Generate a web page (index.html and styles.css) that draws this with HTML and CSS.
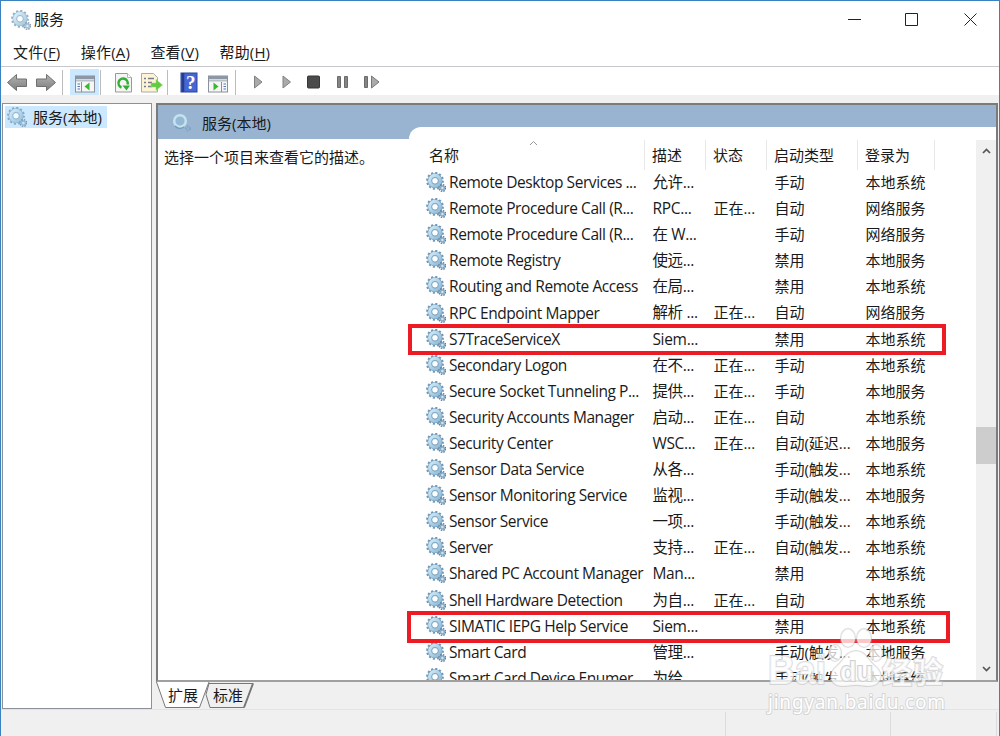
FILE: index.html
```html
<!DOCTYPE html>
<html lang="zh-CN">
  <head>
    <meta charset="UTF-8" />
    <meta name="viewport" content="width=device-width, initial-scale=1.0" />
    <title>服务</title>
    <link rel="stylesheet" href="styles.css">
  </head>

  <body>
    <svg class="defs">
      <linearGradient id="gear-fill" x1="0" y1="0" x2="1" y2="1">
        <stop offset="0" stop-color="#cfe8f5" />
        <stop offset="1" stop-color="#8fb9d6" />
      </linearGradient>
      <linearGradient id="grey-fill" x1="0" y1="0" x2="0" y2="1">
        <stop offset="0" stop-color="#b5b5b5" />
        <stop offset="1" stop-color="#7c7c7c" />
      </linearGradient>
      <symbol id="gear" viewBox="0 0 20 20">
        <circle cx="9" cy="8.8" r="7.9" fill="none" stroke="#7197b5" stroke-width="2" stroke-dasharray="2.1 2.03" />
        <circle cx="9" cy="8.8" r="5.3" fill="none" stroke="#6c9dbe" stroke-width="4.4" />
        <circle cx="9" cy="8.8" r="5.2" fill="none" stroke="url(#gear-fill)" stroke-width="3.5" />
        <circle cx="9" cy="8.8" r="3.3" fill="#fbfdff" stroke="#6f9dbd" stroke-width=".9" />
        <circle cx="16.4" cy="16" r="3.3" fill="none" stroke="#587d9c" stroke-width="1.5" stroke-dasharray="1.5 1.1" />
        <circle cx="16.4" cy="16" r="2" fill="#d4e5f0" stroke="#86a9c4" stroke-width="1.5" />
      </symbol>
    </svg>

    <div class="window">
      <div class="title-bar">
        <svg class="gear pale"><use href="#gear" /></svg>
        <span class="title">服务</span>
        <svg class="controls" width="130" height="16" viewBox="0 0 130 16">
          <path d="M0 7.5h13M57.5 1.5h12v12h-12zM116.500 1.500l12 12M128.500 1.500l-12 12" fill="none" stroke="#222" />
        </svg>
      </div>

      <div class="menu-bar">
        <span>文件(<u>F</u>)</span>
        <span>操作(<u>A</u>)</span>
        <span>查看(<u>V</u>)</span>
        <span>帮助(<u>H</u>)</span>
      </div>

      <div class="toolbar">
        <svg width="400" height="28" viewBox="0 -1 400 28">
          <path d="M6.500 14.500l9-8v4.500h10v7.500h-10v4z" fill="url(#grey-fill)" stroke="#707070" />
          <path d="M54.500 14.500l-9-8v4.500h-10v7.500h10v4z" fill="url(#grey-fill)" stroke="#707070" />
          <path d="M61.500 2v25M99.500 2v25M166.500 2v25M234.500 2v25" stroke="#bcbcbc" />
          <rect x="69" y="1" width="29" height="26" fill="#cce8ff" />
          <!-- console tree -->
          <rect x="74.500" y="8" width="19" height="16" fill="#f6f6f6" stroke="#8a919b" />
          <path d="M75 8h18v3h-18z" fill="#8d98a6" />
          <path d="M75 12.500h18" stroke="#b7bfc9" stroke-width="2" />
          <path d="M80.500 14v10" stroke="#8a919b" />
          <path d="M76.500 16h2.500M76.500 18.500h2.500M76.500 21h2.500" stroke="#4d7dbd" />
          <path d="M88.500 14.500v8l-5-4z" fill="#3ab82e" />
          <!-- refresh -->
          <path d="M114.500 5.500h12l4 4v14.500h-16z" fill="#f5f5f5" stroke="#999" />
          <path d="M126.500 5.500v4h4" fill="#fff" stroke="#b5b5b5" />
          <path d="M120.500 19.500a4.600 4.600 0 1 1 6-3" fill="none" stroke="#36ad35" stroke-width="2.500" />
          <path d="M121.500 17.500h7.500l-3.500 5z" fill="#36ad35" />
          <!-- export -->
          <path d="M140.500 5.500h12l4 4v14.500h-16z" fill="#fdf4d5" stroke="#aaa" />
          <path d="M143 10.500h2M143 14.500h2M143 18.500h2M147 10.500h6M147 14.500h4M147 18.500h4" stroke="#777b8d" stroke-width="1.500" />
          <path d="M150 15h5v-3.500l6.500 5.500-6.500 5.500v-3.500h-5z" fill="#62cd3c" stroke="#9ad785" stroke-width=".5" />
          <!-- help -->
          <rect x="180" y="5" width="16" height="19" fill="#4567d3" stroke="#29449e" />
          <path d="M182 5v19" stroke="#263c91" stroke-width="2.500" />
          <text x="185" y="21" class="help-mark">?</text>
          <!-- action pane -->
          <rect x="207.500" y="8" width="19" height="16" fill="#f6f6f6" stroke="#8a919b" />
          <path d="M208 8h18v3h-18z" fill="#8d98a6" />
          <path d="M208 12.500h18" stroke="#b7bfc9" stroke-width="2" />
          <path d="M220.500 14v10" stroke="#8a919b" />
          <path d="M222.500 16h2.500M222.500 18.500h2.500M222.500 21h2.500" stroke="#4d7dbd" />
          <path d="M212.500 14.500v8l5-4z" fill="#3ab82e" />
          <!-- start, resume, stop, pause, restart -->
          <path d="M253.500 8v12l7.500-6zM282 8v12l7.500-6z" fill="#aaa" stroke="#808080" />
          <rect x="306.500" y="8" width="12" height="12" rx="1" fill="#4b4b4b" stroke="#373737" />
          <path d="M336.500 8.500h3v11h-3zM343.500 8.500h3v11h-3zM363.500 8.500h3v11h-3z" fill="#858585" stroke="#6b6b6b" />
          <path d="M370.500 8v12l7.500-6z" fill="#aaa" stroke="#777" />
        </svg>
      </div>

      <div class="main">
        <div class="tree">
          <div class="tree-item">
            <svg class="gear pale"><use href="#gear" /></svg>
            <span>服务(本地)</span>
          </div>
        </div>

        <div class="right">
          <div class="pane">
            <div class="band">
              <svg width="20" height="20" viewBox="0 0 20 20">
                <circle cx="8" cy="8" r="5.800" fill="#94b9d2" stroke="#c4e2ef" stroke-width="2.500" />
                <path d="M3 13a7 7 0 0 0 9 1" fill="none" stroke="#7399b9" stroke-width="1.500" />
                <circle cx="16" cy="15.500" r="2" fill="none" stroke="#7ea5c4" stroke-width="2" stroke-dasharray="1.500 1" />
              </svg>
              <span>服务(本地)</span>
            </div>
            <div class="pane-body">
              <div class="description">选择一个项目来查看它的描述。</div>
              <div class="list">
                <div class="row head">
                  <span>名称</span><span>描述</span><span>状态</span><span>启动类型</span><span>登录为</span>
                  <svg class="sort" width="9" height="6" viewBox="0 0 9 6"><path d="M1 5l3.500-3.500 3.500 3.500" fill="none" stroke="#999" /></svg>
                </div>
                <div class="rows">
                  <div class="row"><span><svg class="gear"><use href="#gear" /></svg>Remote Desktop Services ...</span><span>允许...</span><span></span><span>手动</span><span>本地系统</span></div>
                  <div class="row"><span><svg class="gear"><use href="#gear" /></svg>Remote Procedure Call (R...</span><span>RPC...</span><span>正在...</span><span>自动</span><span>网络服务</span></div>
                  <div class="row"><span><svg class="gear"><use href="#gear" /></svg>Remote Procedure Call (R...</span><span>在 W...</span><span></span><span>手动</span><span>网络服务</span></div>
                  <div class="row"><span><svg class="gear"><use href="#gear" /></svg>Remote Registry</span><span>使远...</span><span></span><span>禁用</span><span>本地服务</span></div>
                  <div class="row"><span><svg class="gear"><use href="#gear" /></svg>Routing and Remote Access</span><span>在局...</span><span></span><span>禁用</span><span>本地系统</span></div>
                  <div class="row"><span><svg class="gear"><use href="#gear" /></svg>RPC Endpoint Mapper</span><span>解析 ...</span><span>正在...</span><span>自动</span><span>网络服务</span></div>
                  <div class="row"><span><svg class="gear"><use href="#gear" /></svg>S7TraceServiceX</span><span>Siem...</span><span></span><span>禁用</span><span>本地系统</span></div>
                  <div class="row"><span><svg class="gear"><use href="#gear" /></svg>Secondary Logon</span><span>在不...</span><span>正在...</span><span>手动</span><span>本地系统</span></div>
                  <div class="row"><span><svg class="gear"><use href="#gear" /></svg>Secure Socket Tunneling P...</span><span>提供...</span><span>正在...</span><span>手动</span><span>本地服务</span></div>
                  <div class="row"><span><svg class="gear"><use href="#gear" /></svg>Security Accounts Manager</span><span>启动...</span><span>正在...</span><span>自动</span><span>本地系统</span></div>
                  <div class="row"><span><svg class="gear"><use href="#gear" /></svg>Security Center</span><span>WSC...</span><span>正在...</span><span>自动(延迟...</span><span>本地服务</span></div>
                  <div class="row"><span><svg class="gear"><use href="#gear" /></svg>Sensor Data Service</span><span>从各...</span><span></span><span>手动(触发...</span><span>本地系统</span></div>
                  <div class="row"><span><svg class="gear"><use href="#gear" /></svg>Sensor Monitoring Service</span><span>监视...</span><span></span><span>手动(触发...</span><span>本地服务</span></div>
                  <div class="row"><span><svg class="gear"><use href="#gear" /></svg>Sensor Service</span><span>一项...</span><span></span><span>手动(触发...</span><span>本地系统</span></div>
                  <div class="row"><span><svg class="gear"><use href="#gear" /></svg>Server</span><span>支持...</span><span>正在...</span><span>自动(触发...</span><span>本地系统</span></div>
                  <div class="row"><span><svg class="gear"><use href="#gear" /></svg>Shared PC Account Manager</span><span>Man...</span><span></span><span>禁用</span><span>本地系统</span></div>
                  <div class="row"><span><svg class="gear"><use href="#gear" /></svg>Shell Hardware Detection</span><span>为自...</span><span>正在...</span><span>自动</span><span>本地系统</span></div>
                  <div class="row"><span><svg class="gear"><use href="#gear" /></svg>SIMATIC IEPG Help Service</span><span>Siem...</span><span></span><span>禁用</span><span>本地系统</span></div>
                  <div class="row"><span><svg class="gear"><use href="#gear" /></svg>Smart Card</span><span>管理...</span><span></span><span>手动(触发...</span><span>本地服务</span></div>
                  <div class="row"><span><svg class="gear"><use href="#gear" /></svg>Smart Card Device Enumer...</span><span>为给...</span><span></span><span>手动(触发...</span><span>本地系统</span></div>
                </div>
              </div>
              <div class="scrollbar">
                <svg width="9" height="6" viewBox="0 0 9 6"><path d="M1 5l3.500-3.500 3.500 3.500" fill="none" stroke="#555" stroke-width="1.700" /></svg>
                <div class="thumb"></div>
                <svg width="9" height="6" viewBox="0 0 9 6"><path d="M1 1l3.500 3.500 3.500-3.500" fill="none" stroke="#555" stroke-width="1.700" /></svg>
              </div>
            </div>
          </div>
          <svg class="tabs" width="110" height="27" viewBox="0 0 110 27">
            <path d="M53 1.500h44l-9 24h-34l-4-13z" fill="#f0f0f0" stroke="#777" />
            <path d="M97 1.500l-9 24" stroke="#777" stroke-width="2" />
            <path d="M.5 0l9 25.500h34l9.500-25.500" fill="#fff" stroke="#777" />
            <text x="12" y="19">扩展</text>
            <text x="57" y="19">标准</text>
          </svg>
        </div>
      </div>

      <div class="status-bar"><span></span><span></span><span></span></div>
    </div>

    <div class="mark mark-first"></div>
    <div class="mark mark-second"></div>

    <svg class="watermark" width="190" height="92" viewBox="0 0 190 92">
      <text x="3" y="57" class="brand" textLength="58" lengthAdjust="spacingAndGlyphs">Bai</text>
      <g class="paw">
        <ellipse cx="83" cy="11" rx="7" ry="9" />
        <ellipse cx="99" cy="11" rx="7" ry="9" />
        <ellipse cx="70" cy="26" rx="6" ry="8" />
        <ellipse cx="111" cy="26" rx="6" ry="8" />
        <path d="M91 24c10 0 12 10 20 16 9 8 4 19-7 19-6 0-8-1-13-1s-8 1-14 1c-11 0-15-12-5-20 7-6 9-15 19-15z" />
      </g>
      <text x="75" y="54" class="du" textLength="33" lengthAdjust="spacingAndGlyphs">du</text>
      <text x="117" y="56" class="jingyan" textLength="61">经验</text>
      <text x="3" y="82" class="site" textLength="177">jingyan.baidu.com</text>
    </svg>
  </body>
</html>
```
FILE: styles.css
```css
* {
  box-sizing: border-box;
}

body {
  margin: 0;
  overflow: hidden;
  font-family: "Open Sans", "Noto Sans CJK SC", sans-serif;
  font-size: 15px;
  color: #1a1a1a;
}

svg {
  display: block;
  flex: none;
}

.defs {
  position: absolute;
  width: 0;
  height: 0;
}

.window {
  display: flex;
  flex-direction: column;
  height: 736px;
  border: 1px solid #3b82c0;
  border-bottom: none;
  background-color: #f0f0f0;
}

.gear {
  width: 20px;
  height: 20px;
}

.pale {
  opacity: 0.75;
}

.title-bar {
  display: flex;
  align-items: center;
  height: 37px;
  padding: 0 21px 0 10px;
  background-color: #fff;
}

.title {
  margin: -2px 0 0 3px;
}

.controls {
  margin-left: auto;
}

.menu-bar {
  display: flex;
  gap: 20.5px;
  height: 29px;
  padding-left: 12px;
  line-height: 28px;
  background-color: #fff;
  border-bottom: 1px solid #c8c8cc;
}

.menu-bar span {
  white-space: nowrap;
  letter-spacing: 0.15px;
}

.menu-bar u {
  text-underline-offset: 2px;
}

.toolbar {
  height: 28px;
  background-color: #fff;
}

.help-mark {
  font: bold 19px "Liberation Serif", serif;
  fill: #fff;
}

.main {
  display: flex;
  gap: 4px;
  height: 606px;
  margin-top: 8px;
  padding-left: 1px;
}

.tree {
  width: 150px;
  padding: 2px;
  background-color: #fff;
  border: 1px solid #8b9099;
}

.tree-item {
  display: flex;
  align-items: center;
  gap: 6px;
  width: 102px;
  height: 22px;
  padding-left: 2px;
  background-color: #cce8ff;
  line-height: 20px;
  white-space: nowrap;
}

.tree-item span,
.band span {
  margin-top: -1px;
}

.right {
  flex: 1;
  min-width: 0;
  padding-right: 1px;
}

.pane {
  height: 579px;
  background-color: #fff;
  border: 2px solid #7b7b7b;
  border-bottom-color: #a0a0a0;
}

.band {
  display: flex;
  align-items: center;
  gap: 10px;
  height: 34px;
  padding: 2px 0 0 14px;
  background-color: #99b4d1;
}

.pane-body {
  display: flex;
  height: 541px;
}

.description {
  width: 251px;
  padding: 7px 0 0 6px;
  white-space: nowrap;
}

/* the list reaches up into the blue band */
.list {
  width: 567px;
  height: 553px;
  margin-top: -12px;
  padding-top: 13px;
  overflow: hidden;
  background-color: #fff;
  border-top-left-radius: 12px;
}

.row {
  display: grid;
  grid-template-columns: 236px 61px 61px 91px 77px;
  height: 26.1px;
  line-height: 26px;
  white-space: nowrap;
}

.row span {
  padding-left: 7.4px;
}

.row span:first-child {
  display: flex;
  align-items: center;
  gap: 3px;
  padding-left: 17px;
}

.rows .row span:first-child {
  font-size: 15.5px;
  letter-spacing: -0.43px;
}

.rows .row span:nth-child(2) {
  font-size: 15.5px;
  letter-spacing: -0.3px;
}

.head {
  position: relative;
  height: 29px;
  line-height: 30px;
}

.row.head span {
  padding-left: 7px;
  border-right: 1px solid #e8e8e8;
}

.row.head span:first-child {
  padding-left: 20px;
}

.sort {
  position: absolute;
  left: 120px;
  top: 0;
}

.scrollbar {
  display: flex;
  flex-direction: column;
  align-items: center;
  width: 20px;
  margin-top: -12px;
  padding: 8px 0;
  border-top: 13px solid #fff;
  background-color: #f0f0f0;
}

.thumb {
  width: 20px;
  height: 37px;
  margin: 273px 0 auto;
  background-color: #cdcdcd;
}

.tabs {
  font-size: 15px;
  fill: #1a1a1a;
}

.status-bar {
  display: flex;
  flex: 1;
  padding-top: 2px;
  border-top: 1px solid #e3e3e3;
}

.status-bar span {
  width: 725px;
  border-right: 1px solid #dcdcdc;
}

.status-bar span + span {
  width: 165px;
}

.status-bar span:last-child {
  width: 106px;
}

.mark {
  position: absolute;
  border: 4px solid #ed1c24;
}

.mark-first {
  left: 408px;
  top: 324px;
  width: 538px;
  height: 31px;
}

.mark-second {
  left: 407px;
  top: 611px;
  width: 543px;
  height: 32px;
}

.watermark {
  position: absolute;
  left: 765px;
  top: 627px;
}

.watermark text,
.paw {
  fill: rgba(255, 255, 255, 0.75);
  stroke: rgba(195, 195, 195, 0.6);
  stroke-width: 2px;
  paint-order: stroke;
}

.brand {
  font: bold 41px "Liberation Sans", sans-serif;
}

.watermark .du {
  font: bold 27px "Liberation Sans", sans-serif;
  stroke: #d0d0d0;
}

.jingyan {
  font: bold 30px "Noto Sans CJK SC", sans-serif;
}

.watermark .site {
  font: 19px "Noto Sans", sans-serif;
  fill: #fff;
}
```
